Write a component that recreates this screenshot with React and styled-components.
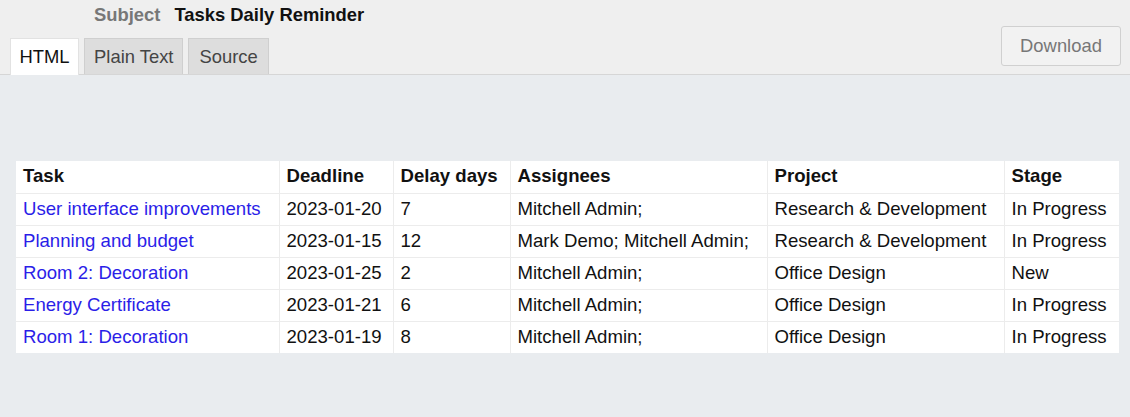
import React from 'react'
import styled, { createGlobalStyle } from 'styled-components'

const Global = createGlobalStyle`
  html, body { margin: 0; padding: 0; }
  body {
    font-family: "Liberation Sans", Arial, sans-serif;
    background: #e9ecef;
    width: 1130px;
    height: 417px;
    overflow: hidden;
  }
`

const Page = styled.div`
  width: 1130px;
  height: 417px;
  display: flex;
  flex-direction: column;
`

const Header = styled.div`
  background: #efefef;
  border-bottom: 1px solid #d6d6d6;
  height: 74px;
  display: flex;
  flex-direction: column;
  position: relative;
`

const SubjectRow = styled.div`
  display: flex;
  align-items: center;
  gap: 14px;
  height: 29px;
  padding-left: 94px;
  font-size: 18.4px;
  font-weight: bold;
  & .label { color: #777; }
  & .value { color: #111; }
`

const TabBar = styled.div`
  display: flex;
  align-items: flex-end;
  gap: 5px;
  padding-left: 10px;
  margin-top: 9px;
  flex: 1;
`

const Tab = styled.div`
  height: ${p => (p.$active ? '37px' : '36px')};
  margin-bottom: ${p => (p.$active ? '-1px' : '0')};
  box-sizing: border-box;
  padding: 0 ${p => p.$pad || 9}px;
  display: flex;
  align-items: center;
  font-size: 18.4px;
  color: ${p => (p.$active ? '#111' : '#444')};
  background: ${p => (p.$active ? '#fff' : '#dddddd')};
  border: 1px solid ${p => (p.$active ? '#e2e2e2' : '#cfcfcf')};
  border-bottom: none;
`

const DownloadButton = styled.button`
  position: absolute;
  right: 9px;
  top: 26px;
  width: 120px;
  height: 40px;
  box-sizing: border-box;
  background: #f2f2f2;
  border: 1px solid #d0d0d0;
  border-radius: 3px;
  font-family: "Liberation Sans", Arial, sans-serif;
  font-size: 18.4px;
  color: #777;
`

const Body = styled.div`
  flex: 1;
  padding: 86px 11px 0 16px;
`

const Table = styled.table`
  width: 1103px;
  border-collapse: collapse;
  background: #fff;
  font-size: 18.6px;
  color: #111;
  & th, & td {
    border: 1px solid #ececec;
    height: 32px;
    box-sizing: border-box;
    padding: 0 7px 1px;
    text-align: left;
    white-space: nowrap;
  }
  & tr:first-child th { border-top: none; }
  & tr:last-child td { border-bottom: none; }
  & th:first-child, & td:first-child { border-left: none; }
  & th:last-child, & td:last-child { border-right: none; }
  & th { font-weight: bold; }
`

const TaskLink = styled.a`
  color: #2b1ee8;
  text-decoration: none;
`

const rows = [
  ['User interface improvements', '2023-01-20', '7', 'Mitchell Admin;', 'Research & Development', 'In Progress'],
  ['Planning and budget', '2023-01-15', '12', 'Mark Demo; Mitchell Admin;', 'Research & Development', 'In Progress'],
  ['Room 2: Decoration', '2023-01-25', '2', 'Mitchell Admin;', 'Office Design', 'New'],
  ['Energy Certificate', '2023-01-21', '6', 'Mitchell Admin;', 'Office Design', 'In Progress'],
  ['Room 1: Decoration', '2023-01-19', '8', 'Mitchell Admin;', 'Office Design', 'In Progress'],
]

const widths = [263, 114, 117, 257, 237, 115]

export default function App() {
  return (
    <Page>
      <Global />
      <Header>
        <SubjectRow>
          <span className="label">Subject</span>
          <span className="value">Tasks Daily Reminder</span>
        </SubjectRow>
        <TabBar>
          <Tab $active $pad={8.5}>HTML</Tab>
          <Tab>Plain Text</Tab>
          <Tab $pad={10}>Source</Tab>
        </TabBar>
        <DownloadButton>Download</DownloadButton>
      </Header>
      <Body>
        <Table>
          <colgroup>
            {widths.map((w, i) => <col key={i} style={{ width: w }} />)}
          </colgroup>
          <thead>
            <tr>
              <th>Task</th>
              <th>Deadline</th>
              <th>Delay days</th>
              <th>Assignees</th>
              <th>Project</th>
              <th>Stage</th>
            </tr>
          </thead>
          <tbody>
            {rows.map((r, i) => (
              <tr key={i}>
                <td><TaskLink href="#">{r[0]}</TaskLink></td>
                {r.slice(1).map((c, j) => <td key={j}>{c}</td>)}
              </tr>
            ))}
          </tbody>
        </Table>
      </Body>
    </Page>
  )
}
